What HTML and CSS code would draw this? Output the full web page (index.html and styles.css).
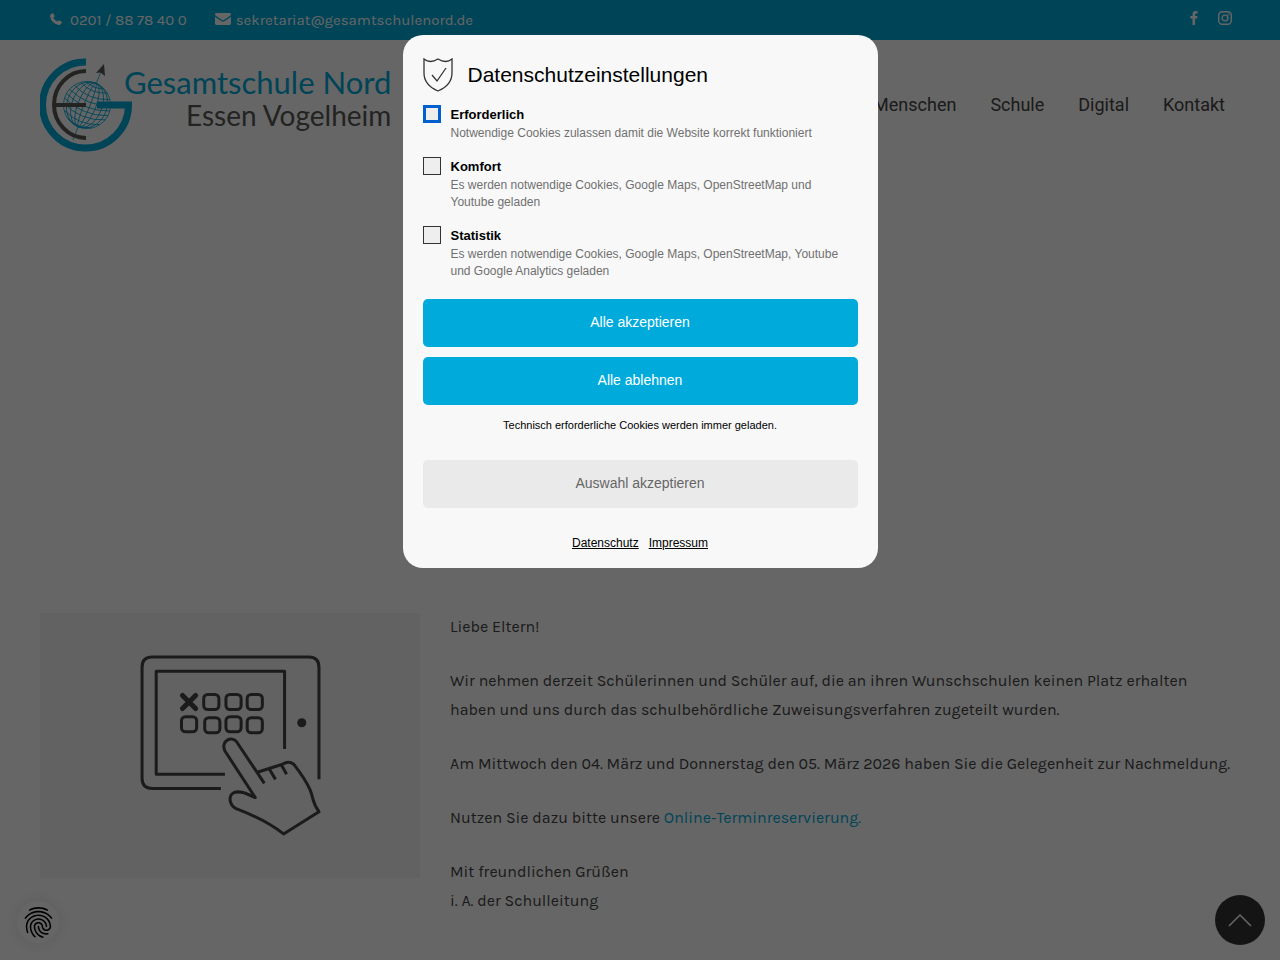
FILE: index.html
```html
<!DOCTYPE html>
<html lang="de">
  <head>
    <meta charset="UTF-8" />
    <meta name="viewport" content="width=device-width, initial-scale=1.0" />
    <title>Gesamtschule Nord - Essen Vogelheim</title>
    <link rel="stylesheet" href="styles.css">
  </head>
  <body>
    <div class="topbar">
      <a href="tel:+4920188784000" class="topbar-link">
        <svg width="12" height="12" viewBox="0 0 12 12"><path d="M0.6 1.6 L2.4 0.3 Q3.2 0 3.6 0.8 L4.6 2.9 Q4.8 3.6 4.2 4 L3.3 4.7 Q4.4 7 7.2 8.6 L8 7.8 Q8.6 7.2 9.2 7.5 L11.4 8.6 Q12 9 11.8 9.7 L10.8 11.3 Q9.9 12.1 8.4 11.9 Q1.4 10.4 0.1 3.6 Q0 2.3 0.6 1.6Z"/></svg>
        <span>0201 / 88 78 40 0</span>
      </a>
      <a href="mailto:sekretariat@gesamtschulenord.de" class="topbar-link mail">
        <svg width="16" height="12" viewBox="0 0 16 12"><path d="M0 1.3Q0 0 1.3 0H14.7Q16 0 16 1.3Q16 2 15.2 2.7L9 7Q8 7.6 7 7L0.8 2.7Q0 2 0 1.3ZM0 3.8L6.6 8.3Q8 9.1 9.4 8.3L16 3.8V10.6Q16 12 14.6 12H1.4Q0 12 0 10.6Z"/></svg>
        <span>sekretariat@gesamtschulenord.de</span>
      </a>
      <div class="social">
        <a href="#facebook" aria-label="Facebook">
          <svg width="8" height="14" viewBox="0 0 8 14"><path d="M7.6 0.1V2.4H6.3Q5.1 2.4 5.1 3.5V5.1H7.5L7.2 7.5H5.1V14H2.5V7.5H0.3V5.1H2.5V3.2Q2.5 0 5.7 0Q6.9 0 7.6 0.1Z"/></svg>
        </a>
        <a href="#instagram" aria-label="Instagram">
          <svg width="14" height="14" viewBox="0 0 14 14" class="line-icon"><rect x="0.7" y="0.7" width="12.6" height="12.6" rx="3.5"/><circle cx="7" cy="7" r="2.9"/><circle cx="10.6" cy="3.4" r="0.3"/></svg>
        </a>
      </div>
    </div>

    <header class="header">
      <a href="#start" class="logo">
        <svg class="logo-mark" width="94" height="94" viewBox="0 0 94 94">
          <g class="globe">
            <circle cx="47" cy="47" r="23.5"/>
            <g transform="rotate(22 47 47)">
              <ellipse cx="47" cy="47" rx="20" ry="23.5"/>
              <ellipse cx="47" cy="47" rx="15" ry="23.5"/>
              <ellipse cx="47" cy="47" rx="9" ry="23.5"/>
              <ellipse cx="47" cy="47" rx="3" ry="23.5"/>
              <path d="M38 25.5Q47 30 56 25.5M33 28.5Q47 35 61 28.5M28 33.5Q47 42 66 33.5M25 39Q47 48 69 39M23.5 44Q47 54 70.5 44M23.5 49Q47 59 70.5 49M24.5 54Q47 64 69.5 54M28 60.5Q47 69 66 60.5M34 66.5Q47 72 60 66.5"/>
            </g>
            <path d="M56 26L62 11M38 69L33 82"/>
          </g>
          <path class="arrow" d="M64 6L65 18L60.5 14.5L56 15Z"/>
          <path class="letter-e" d="M46 13A32 33.5 0 0 0 46 80M14 47H46"/>
          <path class="letter-g" d="M46 4A43 43 0 1 0 88.5 47H57"/>
        </svg>
        <span class="logo-text">
          <span class="logo-name">Gesamtschule Nord</span>
          <span class="logo-place">Essen Vogelheim</span>
        </span>
      </a>
      <nav class="nav">
        <a href="#menschen">Menschen</a>
        <a href="#schule">Schule</a>
        <a href="#digital">Digital</a>
        <a href="#kontakt">Kontakt</a>
      </nav>
    </header>

    <main class="content">
      <div class="picture">
        <svg width="186" height="186" viewBox="0 0 184 184">
          <g class="drawing">
            <path d="M83 133H15Q5 133 5 123V13Q5 3 15 3H170Q180 3 180 13V124"/>
            <path d="M87 119H19V17H146V94"/>
            <rect x="66" y="40" width="15" height="15" rx="4"/>
            <rect x="88" y="40" width="15" height="15" rx="4"/>
            <rect x="109" y="40" width="15" height="15" rx="4"/>
            <rect x="44" y="62" width="15" height="15" rx="4"/>
            <rect x="67" y="63" width="15" height="15" rx="4"/>
            <rect x="88" y="62" width="15" height="15" rx="4"/>
            <rect x="109" y="63" width="15" height="15" rx="4"/>
            <path class="cross" d="M45 41L58 54M58 41L45 54"/>
            <path d="M126 128L100 89C95 79 82 86 87 96L117 142C108 138 102 135 96 137C90 140 91 149 98 153C114 159 130 166 145 178L180 156C173 147 175 143 171 134C167 125 162 118 155 109C151 106 148 107 144 109L119 117M131 114L137 124M143 110L148 119"/>
          </g>
          <circle cx="163" cy="68" r="4.5" fill="#444"/>
        </svg>
      </div>
      <div class="text">
        <p>Liebe Eltern!</p>
        <p>Wir nehmen derzeit Schülerinnen und Schüler auf, die an ihren Wunschschulen keinen Platz erhalten haben und uns durch das schulbehördliche Zuweisungsverfahren zugeteilt wurden.</p>
        <p>Am Mittwoch den 04. März und Donnerstag den 05. März 2026 haben Sie die Gelegenheit zur Nachmeldung.</p>
        <p>Nutzen Sie dazu bitte unsere <a href="#termin">Online-Terminreservierung.</a></p>
        <p>Mit freundlichen Grüßen<br>i. A. der Schulleitung</p>
      </div>
    </main>

    <button type="button" class="privacy-button" aria-label="Datenschutzeinstellungen">
      <svg width="37" height="37" viewBox="0 0 24 24"><path d="M17.81 4.47c-.08 0-.16-.02-.23-.06C15.66 3.42 14 3 12.01 3c-1.98 0-3.86.47-5.57 1.41-.24.13-.54.04-.68-.2-.13-.24-.04-.55.2-.68C7.82 2.52 9.86 2 12.01 2c2.13 0 3.99.47 6.03 1.52.25.13.34.43.21.67-.09.18-.26.28-.44.28zM3.5 9.72c-.1 0-.2-.03-.29-.09-.23-.16-.28-.47-.12-.7.99-1.4 2.25-2.5 3.75-3.27C9.98 4.04 14 4.03 17.15 5.65c1.5.77 2.76 1.86 3.75 3.25.16.22.11.54-.12.7-.23.16-.54.11-.7-.12-.9-1.26-2.04-2.25-3.39-2.94-2.87-1.47-6.54-1.47-9.4.01-1.36.7-2.5 1.7-3.4 2.96-.08.14-.23.21-.39.21zm6.25 12.07c-.13 0-.26-.05-.35-.15-.87-.87-1.34-1.43-2.01-2.64-.69-1.23-1.05-2.73-1.05-4.34 0-2.97 2.54-5.39 5.66-5.39s5.66 2.42 5.66 5.39c0 .28-.22.5-.5.5s-.5-.22-.5-.5c0-2.42-2.09-4.39-4.66-4.39-2.57 0-4.66 1.97-4.66 4.39 0 1.44.32 2.77.93 3.85.64 1.15 1.08 1.64 1.85 2.42.19.2.19.51 0 .71-.11.1-.24.15-.37.15zm7.17-1.85c-1.19 0-2.24-.3-3.1-.89-1.49-1.01-2.38-2.65-2.38-4.39 0-.28.22-.5.5-.5s.5.22.5.5c0 1.41.72 2.74 1.94 3.56.71.48 1.54.71 2.54.71.24 0 .64-.03 1.04-.1.27-.05.53.13.58.41.05.27-.13.53-.41.58-.57.11-1.07.12-1.21.12zM14.91 22c-.04 0-.09-.01-.13-.02-1.59-.44-2.63-1.03-3.72-2.1-1.4-1.39-2.17-3.24-2.17-5.22 0-1.62 1.38-2.94 3.08-2.94 1.7 0 3.08 1.32 3.08 2.94 0 1.07.93 1.94 2.08 1.94s2.08-.87 2.08-1.94c0-3.77-3.25-6.83-7.25-6.83-2.84 0-5.44 1.58-6.61 4.03-.39.81-.59 1.76-.59 2.8 0 .78.07 2.01.67 3.61.1.26-.03.55-.29.64-.26.1-.55-.04-.64-.29-.49-1.31-.73-2.61-.73-3.96 0-1.2.23-2.29.68-3.24 1.33-2.79 4.28-4.6 7.51-4.6 4.55 0 8.25 3.51 8.25 7.83 0 1.62-1.38 2.94-3.08 2.94s-3.08-1.32-3.08-2.94c0-1.07-.93-1.94-2.08-1.94s-2.08.87-2.08 1.94c0 1.71.66 3.31 1.87 4.51.95.94 1.86 1.46 3.27 1.85.27.07.42.35.35.61-.05.23-.26.38-.47.38z"/></svg>
    </button>
    <a href="#start" class="to-top" aria-label="Nach oben">
      <svg width="24" height="14" viewBox="0 0 24 14"><path d="M1 13L12 2L23 13"/></svg>
    </a>

    <div class="overlay">
      <form class="dialog" role="dialog" aria-labelledby="dialogTitle">
        <div class="dialog-head">
          <svg width="30" height="34" viewBox="0 0 30 34"><path d="M1 1Q7 6 15 1Q23 6 29 1V15Q29 27 15 33Q1 27 1 15ZM9 17L14 23L23 10"/></svg>
          <h2 id="dialogTitle">Datenschutzeinstellungen</h2>
        </div>
        <div class="option">
          <input type="checkbox" id="required" class="focused">
          <label for="required"><strong>Erforderlich</strong><span>Notwendige Cookies zulassen damit die Website korrekt funktioniert</span></label>
        </div>
        <div class="option">
          <input type="checkbox" id="comfort">
          <label for="comfort"><strong>Komfort</strong><span>Es werden notwendige Cookies, Google Maps, OpenStreetMap und Youtube geladen</span></label>
        </div>
        <div class="option">
          <input type="checkbox" id="statistics">
          <label for="statistics"><strong>Statistik</strong><span>Es werden notwendige Cookies, Google Maps, OpenStreetMap, Youtube und Google Analytics geladen</span></label>
        </div>
        <div class="actions">
          <button type="button">Alle akzeptieren</button>
          <button type="button">Alle ablehnen</button>
        </div>
        <p class="note">Technisch erforderliche Cookies werden immer geladen.</p>
        <button type="button" class="secondary">Auswahl akzeptieren</button>
        <div class="dialog-links">
          <a href="#datenschutz">Datenschutz</a>
          <a href="#impressum">Impressum</a>
        </div>
      </form>
    </div>
  </body>
</html>
```
FILE: styles.css
```css
:root {
  --blue: #00abdb;
  --gray: #575756;
}
* {
  box-sizing: border-box;
}
body {
  margin: 0;
  min-height: 100vh;
  overflow: hidden;
  background: #fff;
  color: #444;
  font-family: Karla, Inter, "Noto Sans", sans-serif;
  font-size: 16px;
}
a {
  color: var(--blue);
  text-decoration: none;
}
.topbar {
  display: flex;
  align-items: center;
  gap: 28px;
  height: 40px;
  padding: 0 48px 0 50px;
  background: var(--blue);
  font-size: 15px;
}
.topbar a {
  color: #fff;
}
.topbar svg {
  fill: #fff;
}
.topbar .line-icon {
  fill: none;
  stroke: #fff;
  stroke-width: 1.4;
}
.topbar-link {
  display: flex;
  align-items: center;
  gap: 8px;
}
.topbar-link.mail {
  gap: 5px;
}
.topbar-link svg {
  margin-bottom: 3px;
}
.social {
  display: flex;
  gap: 20px;
  margin-left: auto;
}
.header {
  display: flex;
  justify-content: space-between;
  align-items: center;
  height: 130px;
  padding: 0 55px 0 40px;
}
.logo {
  display: flex;
  align-items: flex-start;
  width: 350px;
}
.logo-mark {
  flex: none;
}
.globe {
  fill: none;
  stroke: var(--blue);
  stroke-width: 0.8;
}
.arrow {
  fill: var(--gray);
}
.letter-e {
  fill: none;
  stroke: var(--gray);
  stroke-width: 4;
}
.letter-g {
  fill: none;
  stroke: var(--blue);
  stroke-width: 7;
}
.logo-text {
  display: flex;
  flex-direction: column;
  align-items: flex-end;
  flex: 1;
  padding-top: 8px;
  margin-left: -10px;
  font-family: Lato, sans-serif;
  line-height: 33px;
  white-space: nowrap;
}
.logo-name {
  font-size: 31px;
}
.logo-place {
  color: var(--gray);
  font-size: 28px;
}
.nav {
  display: flex;
  gap: 34px;
  padding-bottom: 2px;
  font-family: Roboto, sans-serif;
  font-size: 18px;
}
.nav a {
  color: #444;
}
.content {
  display: grid;
  grid-template-columns: 380px 1fr;
  align-items: start;
  gap: 30px;
  margin-top: 442px;
  padding: 0 45px 0 40px;
}
.picture {
  display: flex;
  justify-content: center;
  margin-top: 1px;
  padding: 41px 0 38px;
  background: #f6f6f6;
}
.drawing {
  fill: none;
  stroke: #444;
  stroke-width: 3;
  stroke-linejoin: round;
}
.cross {
  stroke-width: 5;
  stroke-linecap: round;
}
.text p {
  margin: 0 0 25px;
  line-height: 29px;
}
.privacy-button {
  position: fixed;
  left: 17px;
  bottom: 17px;
  display: flex;
  align-items: center;
  justify-content: center;
  width: 42px;
  height: 42px;
  padding: 0;
  border: 0;
  border-radius: 50%;
  background: #fff;
  box-shadow: 0 0 16px rgba(0, 0, 0, 0.1);
}
.privacy-button svg {
  flex: none;
  fill: #000;
}
.to-top {
  position: fixed;
  right: 15px;
  bottom: 15px;
  display: flex;
  align-items: center;
  justify-content: center;
  width: 50px;
  height: 50px;
  border-radius: 50%;
  background: #333;
}
.to-top svg {
  fill: none;
  stroke: #fff;
  stroke-width: 1.5;
}
.overlay {
  position: fixed;
  inset: 0;
  display: flex;
  justify-content: center;
  align-items: flex-start;
  padding-top: 35px;
  background: rgba(0, 0, 0, 0.6);
}
.dialog {
  width: 100%;
  max-width: 475px;
  padding: 20px 20px 16px;
  border-radius: 20px;
  background: #f8f8f8;
  color: #000;
  font-family: "Liberation Sans", Arial, sans-serif;
}
.dialog-head {
  display: flex;
  align-items: center;
  gap: 15px;
  height: 40px;
  margin-bottom: 10px;
}
.dialog-head svg {
  fill: none;
  stroke: #333;
  stroke-width: 1.3;
}
.dialog h2 {
  margin: 0;
  font-size: 21px;
  font-weight: normal;
}
.option {
  display: flex;
  align-items: flex-start;
  gap: 10px;
  margin-bottom: 15px;
}
.option input {
  appearance: none;
  flex: none;
  width: 18px;
  height: 18px;
  margin: 0;
  border: 1px solid #333;
  background: #eee;
}
.option .focused {
  border: 3px solid #0060d0;
}
.option strong,
.option span {
  display: block;
}
.option strong {
  font-size: 13px;
  line-height: 20px;
}
.option span {
  color: #707070;
  font-size: 12px;
  line-height: 17px;
}
.actions {
  display: grid;
  gap: 10px;
  margin-top: 19px;
}
.dialog button {
  width: 100%;
  height: 48px;
  padding: 0 0 3px;
  border: 0;
  border-radius: 5px;
  background: var(--blue);
  color: #fff;
  font-family: inherit;
  font-size: 14px;
}
.dialog .secondary {
  background: #eaeaea;
  color: #666;
}
.note {
  margin: 12px 0 27px;
  font-size: 11px;
  line-height: 16px;
  text-align: center;
}
.dialog-links {
  display: flex;
  justify-content: center;
  gap: 10px;
  margin-top: 26px;
  font-size: 12px;
  line-height: 18px;
}
.dialog-links a {
  color: #000;
  text-decoration: underline;
}
```
